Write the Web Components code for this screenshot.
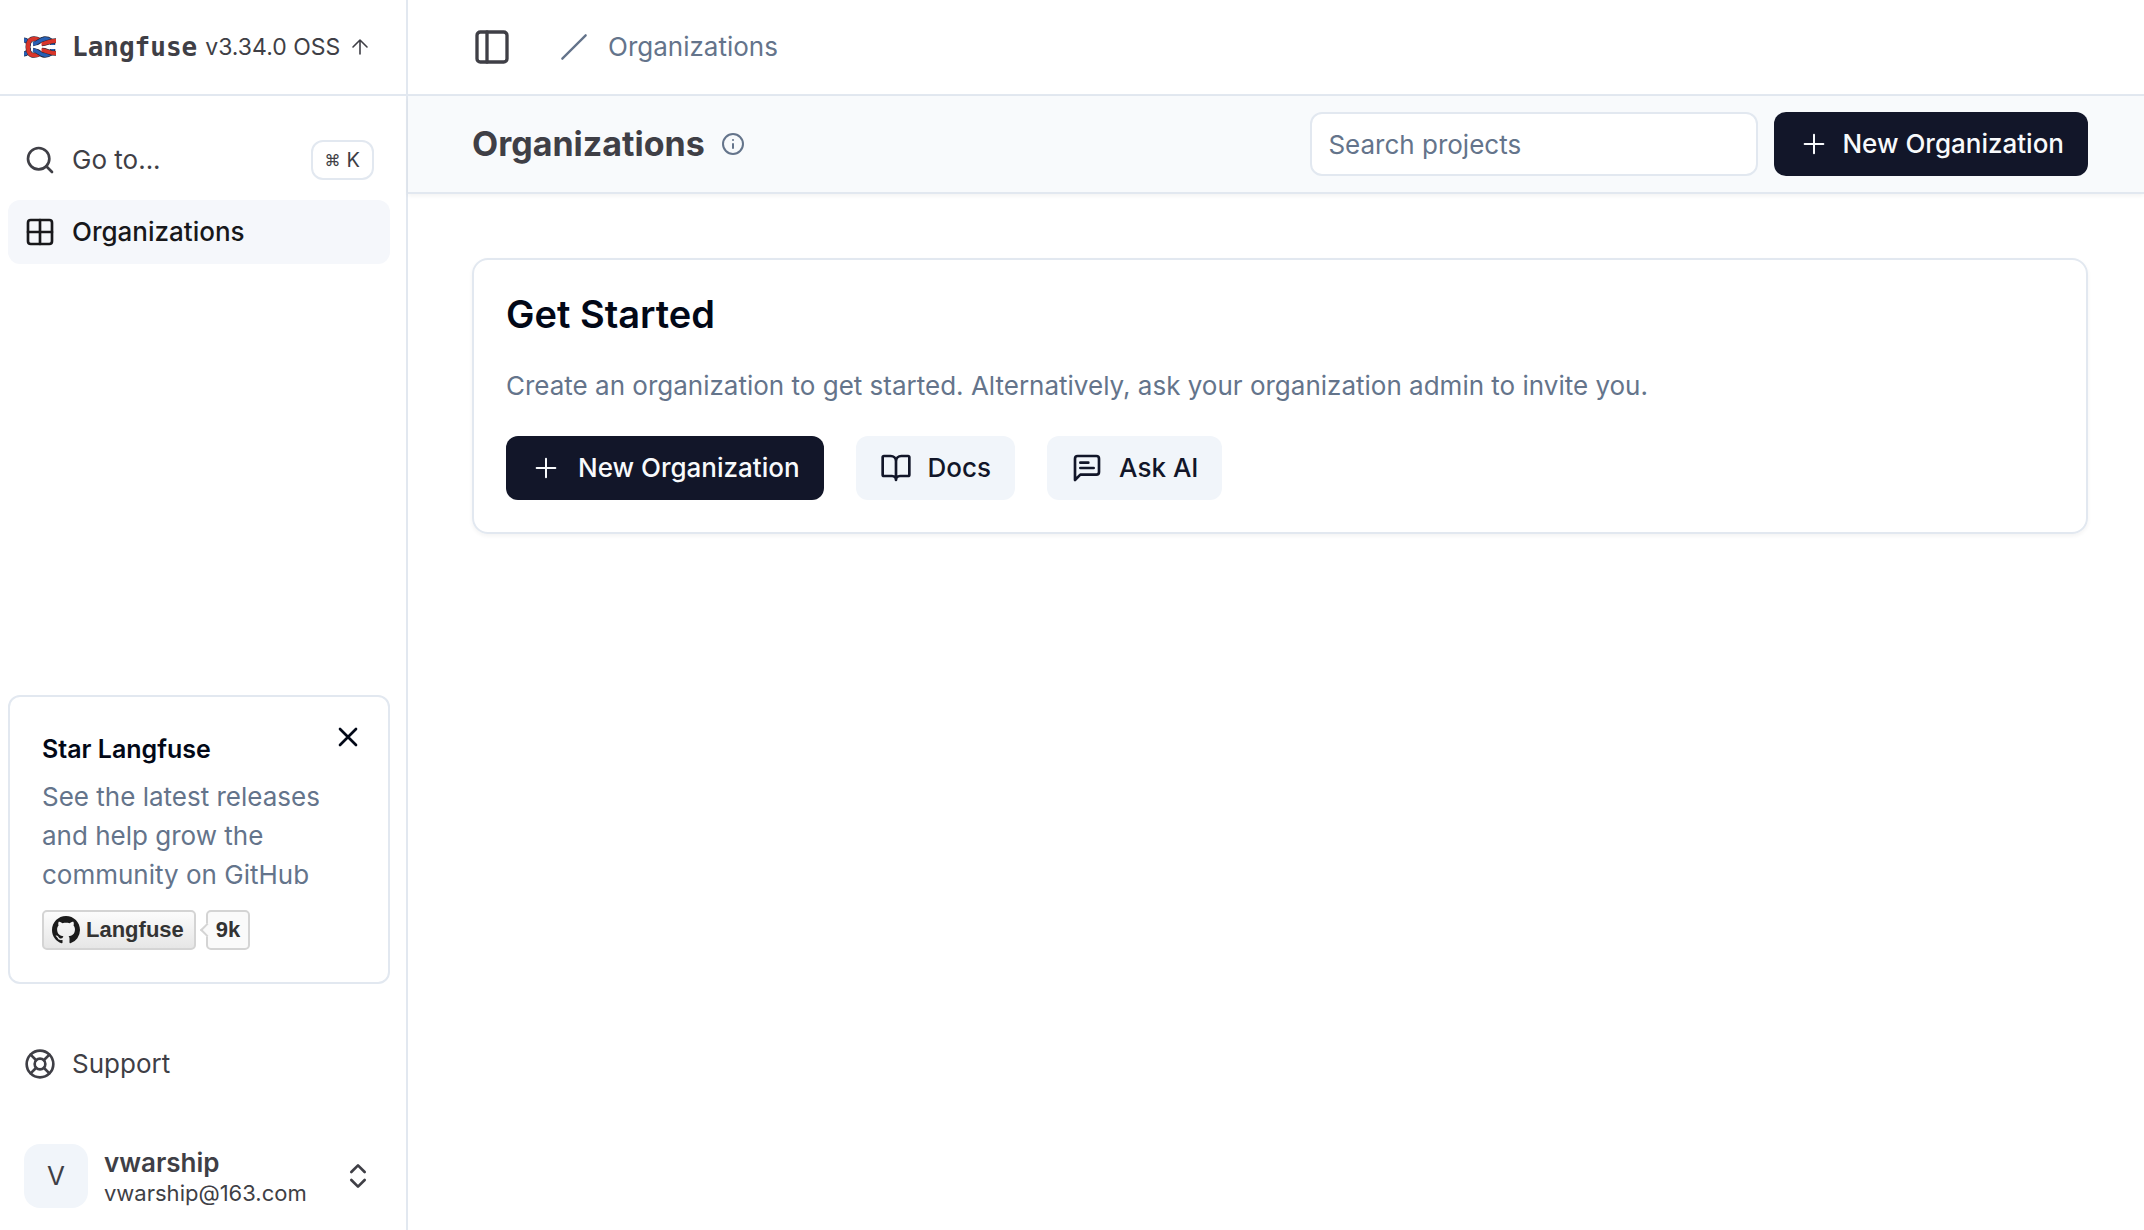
<!DOCTYPE html>
<html lang="en">
<head>
<meta charset="utf-8">
<meta name="viewport" content="width=device-width, initial-scale=1">
<title>Organizations | Langfuse</title>
<style>
  :root {
    --border: #e2e8f0;
    --muted: #64748b;
    --ink: #020817;
    --side: #3f3f46;
    --primary: #121629;
    --secondary: #f1f5fa;
  }
  body {
    margin: 0;
    background: #fff;
    color: var(--side);
    font: 400 26px/40px Inter, "Liberation Sans", sans-serif;
  }
</style>
</head>
<body>
<app-shell>
  <app-sidebar slot="sidebar">
    <brand-bar slot="brand" version="v3.34.0 OSS">Langfuse</brand-bar>
    <nav-item slot="nav" icon="search" shortcut="K">Go to...</nav-item>
    <nav-item slot="nav" icon="grid" href="#organizations" active>Organizations</nav-item>
    <star-card slot="foot" heading="Star Langfuse" count="9k">See the latest releases and help grow the community on GitHub</star-card>
    <nav-item slot="foot" icon="buoy">Support</nav-item>
    <user-menu slot="foot" name="vwarship" email="vwarship@163.com"></user-menu>
  </app-sidebar>
  <top-bar>Organizations</top-bar>
  <page-header heading="Organizations">
    <search-box label="Search projects"></search-box>
    <action-button icon="plus" compact>New Organization</action-button>
  </page-header>
  <start-card heading="Get Started">
    Create an organization to get started. Alternatively, ask your organization admin to invite you.
    <action-button slot="actions" icon="plus">New Organization</action-button>
    <action-button slot="actions" icon="book" variant="secondary" href="#docs">Docs</action-button>
    <action-button slot="actions" icon="message" variant="secondary" href="#ask">Ask AI</action-button>
  </start-card>
</app-shell>

<script>
const ICONS = {
  search: '<circle cx="11" cy="11" r="8"/><path d="m21 21-4.3-4.3"/>',
  grid: '<rect width="18" height="18" x="3" y="3" rx="2"/><path d="M3 12h18M12 3v18"/>',
  buoy: '<circle cx="12" cy="12" r="10"/><path d="m4.93 4.93 4.24 4.24m5.66 0 4.24-4.24m-4.24 9.9 4.24 4.24m-9.9-4.24-4.24 4.24"/><circle cx="12" cy="12" r="4"/>',
  chevrons: '<path d="m7 15 5 5 5-5M7 9l5-5 5 5"/>',
  close: '<path d="M18 6 6 18M6 6l12 12"/>',
  up: '<path d="m5 12 7-7 7 7M12 19V5"/>',
  panel: '<rect width="18" height="18" x="3" y="3" rx="2"/><path d="M9 3v18"/>',
  slash: '<path d="M22 2 2 22"/>',
  info: '<circle cx="12" cy="12" r="10"/><path d="M12 16v-4M12 8h.01"/>',
  plus: '<path d="M5 12h14M12 5v14"/>',
  book: '<path d="M12 7v14M3 18a1 1 0 0 1-1-1V4a1 1 0 0 1 1-1h5a4 4 0 0 1 4 4 4 4 0 0 1 4-4h5a1 1 0 0 1 1 1v13a1 1 0 0 1-1 1h-6a3 3 0 0 0-3 3 3 3 0 0 0-3-3z"/>',
  message: '<path d="M21 15a2 2 0 0 1-2 2H7l-4 4V5a2 2 0 0 1 2-2h14a2 2 0 0 1 2 2zM13 8H7M17 12H7"/>'
};

const icon = (name, size = 32, stroke = 2) =>
  `<svg width="${size}" height="${size}" viewBox="0 0 24 24" fill="none" stroke="currentColor" stroke-width="${stroke}" stroke-linecap="round" stroke-linejoin="round" aria-hidden="true">${ICONS[name]}</svg>`;

const RESET = `
  :host, *, *::before, *::after { box-sizing: border-box; }
  button, a, input { font: inherit; color: inherit; }
  button { border: 0; padding: 0; background: none; cursor: pointer; text-align: left; }
  a { text-decoration: none; }
  h1, h2, h3, p { margin: 0; }
  svg { display: block; flex: none; }
`;

class BaseElement extends HTMLElement {
  connectedCallback() {
    if (this.shadowRoot) return;
    this.attachShadow({ mode: 'open' }).innerHTML = `<style>${RESET}${this.css()}</style>${this.html()}`;
  }
  attr(name) { return this.getAttribute(name) || ''; }
}

customElements.define('app-shell', class extends BaseElement {
  css() { return `
    :host { display: flex; min-height: 100vh; }
    main { flex: 1; min-width: 0; display: flex; flex-direction: column; }
  `; }
  html() { return `<slot name="sidebar"></slot><main><slot></slot></main>`; }
});

customElements.define('app-sidebar', class extends BaseElement {
  css() { return `
    :host { display: flex; flex-direction: column; flex: none; width: 408px; border-right: 2px solid var(--border); }
    nav { display: flex; flex-direction: column; gap: 8px; padding: 32px 16px 0 8px; }
    footer { display: flex; flex-direction: column; gap: 48px; margin-top: auto; padding: 0 16px 22px 8px; }
  `; }
  html() { return `<slot name="brand"></slot><nav><slot name="nav"></slot></nav><footer><slot name="foot"></slot></footer>`; }
});

customElements.define('brand-bar', class extends BaseElement {
  css() { return `
    :host { display: flex; align-items: center; gap: 8px; height: 96px; padding: 0 24px; border-bottom: 2px solid var(--border); }
    a { display: flex; align-items: center; white-space: nowrap; }
    .name { gap: 16px; font: 700 26px/32px "DejaVu Sans Mono", monospace; }
    .version { gap: 8px; font-size: 23px; }
  `; }
  html() { return `
    <a class="name" href="#home">
      <svg width="32" height="22" viewBox="0 0 32 22" fill="none" aria-hidden="true">
        <g stroke="#23263a" stroke-width="5">
          <path d="M0 4c3 0 4 3 7 3.500"/><path d="M0 18c3 0 4-3 7-3.500"/>
          <path d="M12 7c4-1 5-4.200 9-4.200S29 5 29 11s-4 8.200-8 8.200S16 16 12 15"/>
        </g>
        <g stroke="#2860b4" stroke-width="3.800">
          <path d="M0 4c3 0 4 3 7 3.500"/><path d="M0 18c3 0 4-3 7-3.500"/>
          <path d="M12 7c4-1 5-4.200 9-4.200S29 5 29 11s-4 8.200-8 8.200S16 16 12 15"/>
        </g>
        <path fill="#fff" d="M8 11c4-2.200 10-2.200 24-2v4c-14 .2-20 .2-24-2z"/>
        <g stroke="#23263a" stroke-width="5">
          <path d="M15 4c-1.500-1-3-1.300-5-1.300C6 2.700 4 6 4 11s2 8.300 6 8.300c2 0 3.500-.3 5-1.300"/>
          <path d="M18 7.700c5 0 7-3 14-3M18 14.300c5 0 7 3 14 3"/>
        </g>
        <g stroke="#d8352a" stroke-width="4">
          <path d="M15.500 4c-1.500-1-3-1.300-5.500-1.300C6 2.700 4 6 4 11s2 8.300 6 8.300c2.500 0 4-.3 5.500-1.300"/>
          <path d="M17.500 7.700c5 0 7.500-3 14.500-3M17.500 14.300c5 0 7.500 3 14.500 3"/>
        </g>
        <path stroke="#23263a" stroke-width="4.400" d="M9 8c5-.5 6-5 11.500-5.300M9 14c5 .5 6 5 11.500 5.300"/>
        <path stroke="#2860b4" stroke-width="3.400" d="M9 8c5.500-.5 6.500-5 12.500-5.300M9 14c5.500 .5 6.500 5 12.500 5.300"/>
      </svg>
      <slot></slot>
    </a>
    <a class="version" href="#releases">${this.attr('version')} ${icon('up', 24, 1.6)}</a>`; }
});

customElements.define('nav-item', class extends BaseElement {
  css() { return `
    :host { display: block; }
    .row { display: flex; align-items: center; gap: 16px; width: 100%; height: 64px; padding: 0 16px; border-radius: 12px; }
    :host([active]) .row { background: #f5f7fb; color: #18181b; font-weight: 500; }
    .label { flex: 1; }
    kbd { display: flex; align-items: center; gap: 6px; height: 40px; padding: 0 12px; border: 2px solid var(--border); border-radius: 12px; font: 400 20px/24px Inter, "DejaVu Sans", sans-serif; background: #fff; }
    .cmd { font-size: 16px; }
  `; }
  html() {
    const tag = this.hasAttribute('href') ? 'a' : 'button';
    const extra = tag === 'a' ? `href="${this.attr('href')}" aria-current="page"` : 'type="button"';
    const key = this.attr('shortcut');
    return `<${tag} class="row" ${extra}>${icon(this.attr('icon'))}<span class="label"><slot></slot></span>${key ? `<kbd><span class="cmd">⌘</span><span>${key}</span></kbd>` : ''}</${tag}>`;
  }
});

customElements.define('star-card', class extends BaseElement {
  css() { return `
    :host { display: block; position: relative; border: 2px solid var(--border); border-radius: 12px; padding: 32px; }
    h3 { color: var(--ink); font-size: 25px; line-height: 40px; font-weight: 600; }
    p { margin: 8px 0 16px; color: var(--muted); line-height: 39px; }
    .close { position: absolute; top: 24px; right: 24px; color: var(--ink); }
    .badge { display: flex; align-items: center; gap: 10px; color: #333; font: 700 22px/36px "Liberation Sans", sans-serif; }
    .badge a { display: flex; align-items: center; height: 40px; border: 2px solid #d4d4d4; border-radius: 5px; }
    .repo { gap: 6px; padding: 0 10px 0 8px; background: linear-gradient(#fcfcfc, #e6e6e6); }
    .count { position: relative; padding: 0 8px; background: #fafafa; }
    .count::before { content: ""; position: absolute; left: -6px; top: 13px; width: 10px; height: 10px; background: #fafafa; border: solid #d4d4d4; border-width: 0 0 2px 2px; transform: rotate(45deg); }
  `; }
  html() { return `
    <button class="close" type="button" aria-label="Dismiss">${icon('close')}</button>
    <h3>${this.attr('heading')}</h3>
    <p><slot></slot></p>
    <div class="badge">
      <a class="repo" href="#github"><svg width="28" height="28" viewBox="0 0 16 16" fill="#1b1b1b" aria-hidden="true"><path d="M8 0C3.580 0 0 3.580 0 8c0 3.540 2.290 6.530 5.470 7.590.4.070.55-.17.55-.38 0-.19-.01-.82-.01-1.490-2.010.37-2.530-.49-2.690-.94-.09-.23-.48-.94-.82-1.130-.28-.15-.68-.52-.01-.53.63-.01 1.080.58 1.230.82.72 1.210 1.870.87 2.330.66.07-.52.28-.87.51-1.070-1.780-.2-3.640-.89-3.640-3.950 0-.87.31-1.590.82-2.150-.08-.2-.36-1.020.08-2.120 0 0 .67-.21 2.200.82.64-.18 1.320-.27 2-.27s1.360.09 2 .27c1.530-1.040 2.200-.82 2.200-.82.44 1.100.16 1.920.08 2.120.51.56.82 1.270.82 2.150 0 3.070-1.870 3.750-3.650 3.950.29.25.54.73.54 1.480 0 1.070-.01 1.930-.01 2.200 0 .21.15.46.55.38A8.010 8.010 0 0 0 16 8c0-4.420-3.580-8-8-8z"/></svg>Langfuse</a>
      <a class="count" href="#stars">${this.attr('count')}</a>
    </div>`; }
});

customElements.define('user-menu', class extends BaseElement {
  css() { return `
    :host { display: block; padding: 0 16px; }
    button { display: flex; align-items: center; gap: 16px; width: 100%; height: 64px; }
    .avatar { display: flex; align-items: center; justify-content: center; width: 64px; height: 64px; border-radius: 16px; background: var(--secondary); }
    .who { flex: 1; display: flex; flex-direction: column; padding-top: 4px; line-height: 30px; }
    strong { font-weight: 600; }
    .email { font-size: 22px; }
  `; }
  html() { return `<button type="button"><span class="avatar">V</span><span class="who"><strong>${this.attr('name')}</strong><span class="email">${this.attr('email')}</span></span>${icon('chevrons')}</button>`; }
});

customElements.define('top-bar', class extends BaseElement {
  css() { return `
    :host { display: flex; align-items: center; gap: 48px; height: 96px; padding: 0 56px 0 64px; border-bottom: 2px solid var(--border); }
    nav { display: flex; align-items: center; gap: 20px; color: var(--muted); }
  `; }
  html() { return `<button type="button" aria-label="Toggle sidebar">${icon('panel', 40)}</button><nav aria-label="Breadcrumb">${icon('slash', 28)}<a href="#organizations"><slot></slot></a></nav>`; }
});

customElements.define('page-header', class extends BaseElement {
  css() { return `
    :host { display: flex; align-items: center; gap: 16px; height: 98px; padding: 0 56px 0 64px; background: #f8fafc; border-bottom: 2px solid var(--border); box-shadow: 0 2px 4px rgba(0, 0, 0, .05); }
    h1 { font-size: 34px; line-height: 48px; font-weight: 700; }
    .info { flex: 1; color: var(--muted); }
  `; }
  html() { return `<h1>${this.attr('heading')}</h1><div class="info">${icon('info', 24)}</div><slot></slot>`; }
});

customElements.define('search-box', class extends BaseElement {
  css() { return `
    :host { display: block; flex: 0 1 448px; min-width: 0; }
    input { display: block; width: 100%; height: 64px; padding: 0 16px; border: 2px solid var(--border); border-radius: 12px; background: #fff; outline: none; }
    input::placeholder { color: var(--muted); opacity: 1; }
  `; }
  html() { return `<input type="search" placeholder="${this.attr('label')}" aria-label="${this.attr('label')}">`; }
});

customElements.define('action-button', class extends BaseElement {
  css() { return `
    :host { display: block; flex: none; }
    .btn { display: flex; align-items: center; gap: 16px; height: 64px; padding: 0 24px; border-radius: 12px; background: var(--primary); color: #f8fafc; font-weight: 500; white-space: nowrap; }
    :host([compact]) .btn { gap: 12px; }
    :host([variant="secondary"]) .btn { background: var(--secondary); color: var(--primary); }
  `; }
  html() {
    const tag = this.hasAttribute('href') ? 'a' : 'button';
    const extra = tag === 'a' ? `href="${this.attr('href')}"` : 'type="button"';
    return `<${tag} class="btn" ${extra}>${icon(this.attr('icon'), 32, this.attr('icon') === 'plus' ? 1.5 : 2)}<span><slot></slot></span></${tag}>`;
  }
});

customElements.define('start-card', class extends BaseElement {
  css() { return `
    :host { display: block; margin: 64px 56px 64px 64px; padding: 32px; border: 2px solid var(--border); border-radius: 16px; box-shadow: 0 2px 4px rgba(0, 0, 0, .05); }
    h2 { color: var(--ink); font-size: 38px; line-height: 44px; font-weight: 600; }
    p { margin: 30px 0; color: var(--muted); }
    .actions { display: flex; flex-wrap: wrap; gap: 32px; }
  `; }
  html() { return `<h2>${this.attr('heading')}</h2><p><slot></slot></p><div class="actions"><slot name="actions"></slot></div>`; }
});
</script>
</body>
</html>
